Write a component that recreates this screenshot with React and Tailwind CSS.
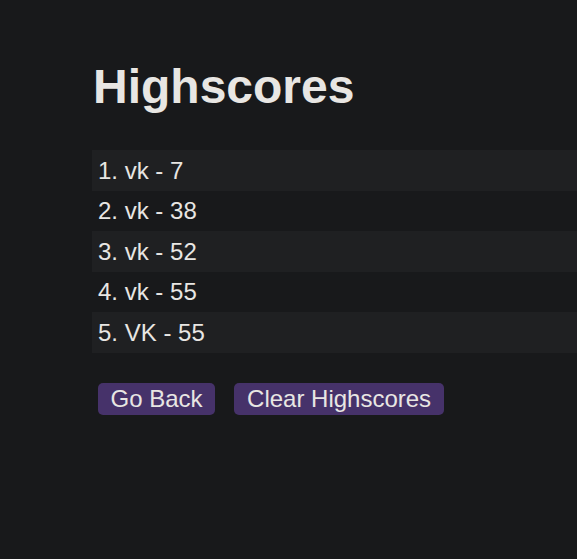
const scores = [
  { name: 'vk', score: 7 },
  { name: 'vk', score: 38 },
  { name: 'vk', score: 52 },
  { name: 'vk', score: 55 },
  { name: 'VK', score: 55 },
];

export default function App() {
  return (
    <div
      className="min-h-[559px] w-full overflow-hidden bg-[#18191b] text-[#e8e6e3] pl-[92px] pt-[59px]"
      style={{ fontFamily: '"Liberation Sans", Arial, sans-serif' }}
    >
      <h1 className="text-[48px] leading-[55px] font-bold pl-[1px]">Highscores</h1>

      {/* score list */}
      <ol className="mt-[36px]">
        {scores.map((s, i) => (
          <li
            key={i}
            className={`text-[24px] leading-[27.6px] py-[6.5px] pl-[6px] ${i % 2 === 0 ? 'bg-[#1f2022]' : ''}`}
          >
            {i + 1}. {s.name} - {s.score}
          </li>
        ))}
      </ol>

      <div className="flex gap-[19px] mt-[30px] ml-[6px]">
        <button className="h-[32px] px-[12.5px] rounded-[5px] bg-[#46326a] text-[24px] leading-[27.6px] text-[#e8e6e3]">
          Go Back
        </button>
        <button className="h-[32px] px-[13px] rounded-[5px] bg-[#46326a] text-[24px] leading-[27.6px] text-[#e8e6e3]">
          Clear Highscores
        </button>
      </div>
    </div>
  );
}
